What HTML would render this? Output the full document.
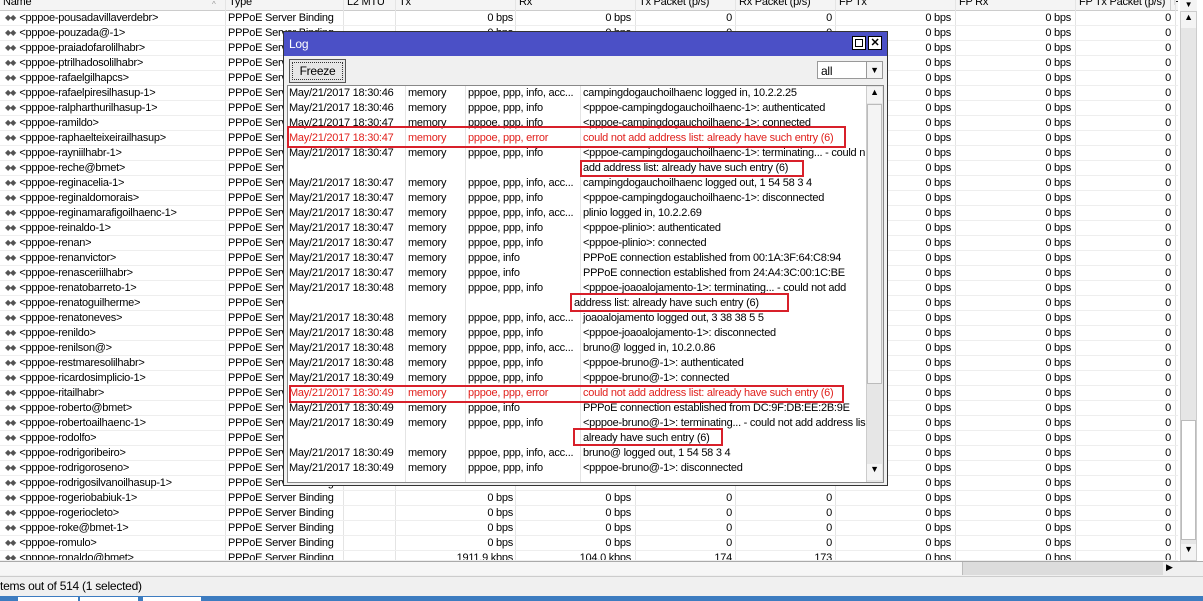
<!DOCTYPE html>
<html><head><meta charset="utf-8"><style>
*{margin:0;padding:0;box-sizing:border-box}
body{width:1203px;height:601px;overflow:hidden;background:#fff;font-family:"Liberation Sans",Arial,sans-serif;font-size:11px;letter-spacing:-0.25px;color:#000;position:relative}
.a{position:absolute;white-space:nowrap}
.hd{position:absolute;left:0;top:0;width:1180px;height:11px;background:#f4f4f4;border-bottom:1px solid #ccc;overflow:hidden}
.hd span{position:absolute;top:-4px;border-left:1px solid #ccc;padding-left:3px;height:15px}
.r{position:absolute;left:0;width:1178px;height:15px;border-bottom:1px solid #eee;overflow:hidden}
.r span{position:absolute;top:1px;white-space:nowrap}
.n{left:5px}.n i{font-style:normal;font-size:8px;color:#555;letter-spacing:-1px;margin-right:4px;position:relative;top:-1px}
.t{left:228px}
.c1{left:395px;width:118px;text-align:right}
.c2{left:515px;width:116px;text-align:right}
.c3{left:635px;width:97px;text-align:right}
.c4{left:735px;width:97px;text-align:right}
.c5{left:835px;width:116px;text-align:right}
.c6{left:955px;width:116px;text-align:right}
.c7{left:1075px;width:96px;text-align:right}
.vl{position:absolute;top:0;width:1px;height:561px;background:#e4e4e4}
.log{position:absolute;left:283px;top:31px;width:605px;height:455px;background:#f0f0f0;border:1px solid #333}
.tb{position:absolute;left:0;top:0;width:603px;height:24px;background:#4b50c6;color:#fff;font-size:12px}
.lr{position:absolute;left:1px;width:577px;height:15px;overflow:hidden}
.lr span{position:absolute;top:0;white-space:nowrap}
.d{left:0}.m{left:119px}.p{left:179px}.g{left:294px}
.red{color:#e0201c}
.bx{position:absolute;border:2px solid #d8202a}
</style></head><body>
<div class="hd"><span style="left:0;border:0">Name</span><span style="left:225px">Type</span><span style="left:343px">L2 MTU</span><span style="left:395px">Tx</span><span style="left:515px">Rx</span><span style="left:635px">Tx Packet (p/s)</span><span style="left:735px">Rx Packet (p/s)</span><span style="left:835px">FP Tx</span><span style="left:955px">FP Rx</span><span style="left:1075px">FP Tx Packet (p/s)</span><span style="left:1170px">F</span></div>
<div class="a" style="left:212px;top:0;font-size:8px;color:#999">^</div>
<div class="vl" style="left:225px"></div><div class="vl" style="left:343px"></div><div class="vl" style="left:395px"></div><div class="vl" style="left:515px"></div><div class="vl" style="left:635px"></div><div class="vl" style="left:735px"></div><div class="vl" style="left:835px"></div><div class="vl" style="left:955px"></div><div class="vl" style="left:1075px"></div><div class="vl" style="left:1175px"></div>

<div class="r" style="top:11px"><span class="n"><i>◆◆</i>&lt;pppoe-pousadavillaverdebr&gt;</span><span class="t">PPPoE Server Binding</span><span class="c1">0 bps</span><span class="c2">0 bps</span><span class="c3">0</span><span class="c4">0</span><span class="c5">0 bps</span><span class="c6">0 bps</span><span class="c7">0</span></div>
<div class="r" style="top:26px"><span class="n"><i>◆◆</i>&lt;pppoe-pouzada@-1&gt;</span><span class="t">PPPoE Server Binding</span><span class="c1">0 bps</span><span class="c2">0 bps</span><span class="c3">0</span><span class="c4">0</span><span class="c5">0 bps</span><span class="c6">0 bps</span><span class="c7">0</span></div>
<div class="r" style="top:41px"><span class="n"><i>◆◆</i>&lt;pppoe-praiadofarolilhabr&gt;</span><span class="t">PPPoE Server Binding</span><span class="c5">0 bps</span><span class="c6">0 bps</span><span class="c7">0</span></div>
<div class="r" style="top:56px"><span class="n"><i>◆◆</i>&lt;pppoe-ptrilhadosolilhabr&gt;</span><span class="t">PPPoE Server Binding</span><span class="c5">0 bps</span><span class="c6">0 bps</span><span class="c7">0</span></div>
<div class="r" style="top:71px"><span class="n"><i>◆◆</i>&lt;pppoe-rafaelgilhapcs&gt;</span><span class="t">PPPoE Server Binding</span><span class="c5">0 bps</span><span class="c6">0 bps</span><span class="c7">0</span></div>
<div class="r" style="top:86px"><span class="n"><i>◆◆</i>&lt;pppoe-rafaelpiresilhasup-1&gt;</span><span class="t">PPPoE Server Binding</span><span class="c5">0 bps</span><span class="c6">0 bps</span><span class="c7">0</span></div>
<div class="r" style="top:101px"><span class="n"><i>◆◆</i>&lt;pppoe-ralpharthurilhasup-1&gt;</span><span class="t">PPPoE Server Binding</span><span class="c5">0 bps</span><span class="c6">0 bps</span><span class="c7">0</span></div>
<div class="r" style="top:116px"><span class="n"><i>◆◆</i>&lt;pppoe-ramildo&gt;</span><span class="t">PPPoE Server Binding</span><span class="c5">0 bps</span><span class="c6">0 bps</span><span class="c7">0</span></div>
<div class="r" style="top:131px"><span class="n"><i>◆◆</i>&lt;pppoe-raphaelteixeirailhasup&gt;</span><span class="t">PPPoE Server Binding</span><span class="c5">0 bps</span><span class="c6">0 bps</span><span class="c7">0</span></div>
<div class="r" style="top:146px"><span class="n"><i>◆◆</i>&lt;pppoe-rayniilhabr-1&gt;</span><span class="t">PPPoE Server Binding</span><span class="c5">0 bps</span><span class="c6">0 bps</span><span class="c7">0</span></div>
<div class="r" style="top:161px"><span class="n"><i>◆◆</i>&lt;pppoe-reche@bmet&gt;</span><span class="t">PPPoE Server Binding</span><span class="c5">0 bps</span><span class="c6">0 bps</span><span class="c7">0</span></div>
<div class="r" style="top:176px"><span class="n"><i>◆◆</i>&lt;pppoe-reginacelia-1&gt;</span><span class="t">PPPoE Server Binding</span><span class="c5">0 bps</span><span class="c6">0 bps</span><span class="c7">0</span></div>
<div class="r" style="top:191px"><span class="n"><i>◆◆</i>&lt;pppoe-reginaldomorais&gt;</span><span class="t">PPPoE Server Binding</span><span class="c5">0 bps</span><span class="c6">0 bps</span><span class="c7">0</span></div>
<div class="r" style="top:206px"><span class="n"><i>◆◆</i>&lt;pppoe-reginamarafigoilhaenc-1&gt;</span><span class="t">PPPoE Server Binding</span><span class="c5">0 bps</span><span class="c6">0 bps</span><span class="c7">0</span></div>
<div class="r" style="top:221px"><span class="n"><i>◆◆</i>&lt;pppoe-reinaldo-1&gt;</span><span class="t">PPPoE Server Binding</span><span class="c5">0 bps</span><span class="c6">0 bps</span><span class="c7">0</span></div>
<div class="r" style="top:236px"><span class="n"><i>◆◆</i>&lt;pppoe-renan&gt;</span><span class="t">PPPoE Server Binding</span><span class="c5">0 bps</span><span class="c6">0 bps</span><span class="c7">0</span></div>
<div class="r" style="top:251px"><span class="n"><i>◆◆</i>&lt;pppoe-renanvictor&gt;</span><span class="t">PPPoE Server Binding</span><span class="c5">0 bps</span><span class="c6">0 bps</span><span class="c7">0</span></div>
<div class="r" style="top:266px"><span class="n"><i>◆◆</i>&lt;pppoe-renasceriilhabr&gt;</span><span class="t">PPPoE Server Binding</span><span class="c5">0 bps</span><span class="c6">0 bps</span><span class="c7">0</span></div>
<div class="r" style="top:281px"><span class="n"><i>◆◆</i>&lt;pppoe-renatobarreto-1&gt;</span><span class="t">PPPoE Server Binding</span><span class="c5">0 bps</span><span class="c6">0 bps</span><span class="c7">0</span></div>
<div class="r" style="top:296px"><span class="n"><i>◆◆</i>&lt;pppoe-renatoguilherme&gt;</span><span class="t">PPPoE Server Binding</span><span class="c5">0 bps</span><span class="c6">0 bps</span><span class="c7">0</span></div>
<div class="r" style="top:311px"><span class="n"><i>◆◆</i>&lt;pppoe-renatoneves&gt;</span><span class="t">PPPoE Server Binding</span><span class="c5">0 bps</span><span class="c6">0 bps</span><span class="c7">0</span></div>
<div class="r" style="top:326px"><span class="n"><i>◆◆</i>&lt;pppoe-renildo&gt;</span><span class="t">PPPoE Server Binding</span><span class="c5">0 bps</span><span class="c6">0 bps</span><span class="c7">0</span></div>
<div class="r" style="top:341px"><span class="n"><i>◆◆</i>&lt;pppoe-renilson@&gt;</span><span class="t">PPPoE Server Binding</span><span class="c5">0 bps</span><span class="c6">0 bps</span><span class="c7">0</span></div>
<div class="r" style="top:356px"><span class="n"><i>◆◆</i>&lt;pppoe-restmaresolilhabr&gt;</span><span class="t">PPPoE Server Binding</span><span class="c5">0 bps</span><span class="c6">0 bps</span><span class="c7">0</span></div>
<div class="r" style="top:371px"><span class="n"><i>◆◆</i>&lt;pppoe-ricardosimplicio-1&gt;</span><span class="t">PPPoE Server Binding</span><span class="c5">0 bps</span><span class="c6">0 bps</span><span class="c7">0</span></div>
<div class="r" style="top:386px"><span class="n"><i>◆◆</i>&lt;pppoe-ritailhabr&gt;</span><span class="t">PPPoE Server Binding</span><span class="c5">0 bps</span><span class="c6">0 bps</span><span class="c7">0</span></div>
<div class="r" style="top:401px"><span class="n"><i>◆◆</i>&lt;pppoe-roberto@bmet&gt;</span><span class="t">PPPoE Server Binding</span><span class="c5">0 bps</span><span class="c6">0 bps</span><span class="c7">0</span></div>
<div class="r" style="top:416px"><span class="n"><i>◆◆</i>&lt;pppoe-robertoailhaenc-1&gt;</span><span class="t">PPPoE Server Binding</span><span class="c5">0 bps</span><span class="c6">0 bps</span><span class="c7">0</span></div>
<div class="r" style="top:431px"><span class="n"><i>◆◆</i>&lt;pppoe-rodolfo&gt;</span><span class="t">PPPoE Server Binding</span><span class="c5">0 bps</span><span class="c6">0 bps</span><span class="c7">0</span></div>
<div class="r" style="top:446px"><span class="n"><i>◆◆</i>&lt;pppoe-rodrigoribeiro&gt;</span><span class="t">PPPoE Server Binding</span><span class="c5">0 bps</span><span class="c6">0 bps</span><span class="c7">0</span></div>
<div class="r" style="top:461px"><span class="n"><i>◆◆</i>&lt;pppoe-rodrigoroseno&gt;</span><span class="t">PPPoE Server Binding</span><span class="c5">0 bps</span><span class="c6">0 bps</span><span class="c7">0</span></div>
<div class="r" style="top:476px"><span class="n"><i>◆◆</i>&lt;pppoe-rodrigosilvanoilhasup-1&gt;</span><span class="t">PPPoE Server Binding</span><span class="c5">0 bps</span><span class="c6">0 bps</span><span class="c7">0</span></div>
<div class="r" style="top:491px"><span class="n"><i>◆◆</i>&lt;pppoe-rogeriobabiuk-1&gt;</span><span class="t">PPPoE Server Binding</span><span class="c1">0 bps</span><span class="c2">0 bps</span><span class="c3">0</span><span class="c4">0</span><span class="c5">0 bps</span><span class="c6">0 bps</span><span class="c7">0</span></div>
<div class="r" style="top:506px"><span class="n"><i>◆◆</i>&lt;pppoe-rogeriocleto&gt;</span><span class="t">PPPoE Server Binding</span><span class="c1">0 bps</span><span class="c2">0 bps</span><span class="c3">0</span><span class="c4">0</span><span class="c5">0 bps</span><span class="c6">0 bps</span><span class="c7">0</span></div>
<div class="r" style="top:521px"><span class="n"><i>◆◆</i>&lt;pppoe-roke@bmet-1&gt;</span><span class="t">PPPoE Server Binding</span><span class="c1">0 bps</span><span class="c2">0 bps</span><span class="c3">0</span><span class="c4">0</span><span class="c5">0 bps</span><span class="c6">0 bps</span><span class="c7">0</span></div>
<div class="r" style="top:536px"><span class="n"><i>◆◆</i>&lt;pppoe-romulo&gt;</span><span class="t">PPPoE Server Binding</span><span class="c1">0 bps</span><span class="c2">0 bps</span><span class="c3">0</span><span class="c4">0</span><span class="c5">0 bps</span><span class="c6">0 bps</span><span class="c7">0</span></div>
<div class="r" style="top:551px;height:10px"><span class="n"><i>◆◆</i>&lt;pppoe-ronaldo@bmet&gt;</span><span class="t">PPPoE Server Binding</span><span class="c1">1911.9 kbps</span><span class="c2">104.0 kbps</span><span class="c3">174</span><span class="c4">173</span><span class="c5">0 bps</span><span class="c6">0 bps</span><span class="c7">0</span></div>

<div class="a" style="left:1178px;top:0;width:25px;height:576px;background:#fff"></div>
<div class="a" style="left:1180px;top:11px;width:17px;height:550px;background:#e6e6e6;border:1px solid #ccc"></div>
<div class="a" style="left:1181px;top:12px;width:15px;height:16px;background:#f4f4f4;font-size:9px;text-align:center">▲</div>
<div class="a" style="left:1181px;top:420px;width:15px;height:120px;background:#fff;border:1px solid #bbb"></div>
<div class="a" style="left:1181px;top:544px;width:15px;height:16px;background:#f4f4f4;font-size:9px;text-align:center">▼</div>
<div class="a" style="left:1180px;top:0;width:17px;height:11px;background:#f4f4f4;font-size:8px;text-align:center">▼</div>
<div class="a" style="left:0;top:561px;width:1203px;height:15px;background:#f0f0f0;border-top:1px solid #aaa"></div>
<div class="a" style="left:0;top:562px;width:963px;height:13px;background:#f6f6f6;border-right:1px solid #bbb"></div>
<div class="a" style="left:963px;top:562px;width:200px;height:13px;background:#dcdcdc"></div>
<div class="a" style="left:1166px;top:562px;font-size:9px">▶</div>
<div class="a" style="left:0;top:576px;width:1203px;height:20px;background:#f0f0f0;border-top:1px solid #ccc"></div>
<div class="a" style="left:0;top:579px;font-size:12px">tems out of 514 (1 selected)</div>
<div class="a" style="left:0;top:596px;width:1203px;height:5px;background:#3d7cc0"></div>
<div class="a" style="left:18px;top:597px;width:60px;height:4px;background:#fff"></div>
<div class="a" style="left:80px;top:597px;width:58px;height:4px;background:#fff"></div>
<div class="a" style="left:143px;top:597px;width:58px;height:4px;background:#fff"></div>

<div class="log">
<div class="tb"><span class="a" style="left:5px;top:5px">Log</span>
<span class="a" style="left:568px;top:4px;width:14px;height:14px;border:1px solid #000;background:#fff"><span class="a" style="left:2px;top:2px;width:8px;height:8px;border:1px solid #000"></span></span>
<span class="a" style="left:584px;top:4px;width:14px;height:14px;border:1px solid #000;background:#fff;color:#000;font-size:11px;text-align:center;line-height:12px;font-weight:bold">✕</span></div>
<div class="a" style="left:5px;top:27px;width:57px;height:24px;border:1px solid #555;background:#e6e6e6"><div class="a" style="left:2px;top:2px;width:51px;height:18px;border:1px dotted #333;text-align:center;line-height:17px;font-size:12px">Freeze</div></div>
<div class="a" style="left:533px;top:29px;width:50px;height:18px;border:1px solid #999;background:#fff;padding:2px 3px;font-size:12px">all</div>
<div class="a" style="left:582px;top:29px;width:17px;height:18px;border:1px solid #999;background:#f4f4f4;font-size:9px;text-align:center;line-height:16px">▼</div>
<div class="a" style="left:3px;top:53px;width:597px;height:398px;background:#fff;border:1px solid #888;overflow:hidden">
<div class="a" style="left:117px;top:0;width:1px;height:400px;background:#e4e4e4"></div>
<div class="a" style="left:177px;top:0;width:1px;height:400px;background:#e4e4e4"></div>
<div class="a" style="left:292px;top:0;width:1px;height:400px;background:#e4e4e4"></div>
<div class="lr" style="top:1px"><span class="d">May/21/2017 18:30:46</span><span class="m">memory</span><span class="p">pppoe, ppp, info, acc...</span><span class="g">campingdogauchoilhaenc logged in, 10.2.2.25</span></div>
<div class="lr" style="top:16px"><span class="d">May/21/2017 18:30:46</span><span class="m">memory</span><span class="p">pppoe, ppp, info</span><span class="g">&lt;pppoe-campingdogauchoilhaenc-1&gt;: authenticated</span></div>
<div class="lr" style="top:31px"><span class="d">May/21/2017 18:30:47</span><span class="m">memory</span><span class="p">pppoe, ppp, info</span><span class="g">&lt;pppoe-campingdogauchoilhaenc-1&gt;: connected</span></div>
<div class="lr red" style="top:46px"><span class="d">May/21/2017 18:30:47</span><span class="m">memory</span><span class="p">pppoe, ppp, error</span><span class="g">could not add address list: already have such entry (6)</span></div>
<div class="lr" style="top:61px"><span class="d">May/21/2017 18:30:47</span><span class="m">memory</span><span class="p">pppoe, ppp, info</span><span class="g">&lt;pppoe-campingdogauchoilhaenc-1&gt;: terminating... - could n</span></div>
<div class="lr" style="top:76px"><span class="g">add address list: already have such entry (6)</span></div>
<div class="lr" style="top:91px"><span class="d">May/21/2017 18:30:47</span><span class="m">memory</span><span class="p">pppoe, ppp, info, acc...</span><span class="g">campingdogauchoilhaenc logged out, 1 54 58 3 4</span></div>
<div class="lr" style="top:106px"><span class="d">May/21/2017 18:30:47</span><span class="m">memory</span><span class="p">pppoe, ppp, info</span><span class="g">&lt;pppoe-campingdogauchoilhaenc-1&gt;: disconnected</span></div>
<div class="lr" style="top:121px"><span class="d">May/21/2017 18:30:47</span><span class="m">memory</span><span class="p">pppoe, ppp, info, acc...</span><span class="g">plinio logged in, 10.2.2.69</span></div>
<div class="lr" style="top:136px"><span class="d">May/21/2017 18:30:47</span><span class="m">memory</span><span class="p">pppoe, ppp, info</span><span class="g">&lt;pppoe-plinio&gt;: authenticated</span></div>
<div class="lr" style="top:151px"><span class="d">May/21/2017 18:30:47</span><span class="m">memory</span><span class="p">pppoe, ppp, info</span><span class="g">&lt;pppoe-plinio&gt;: connected</span></div>
<div class="lr" style="top:166px"><span class="d">May/21/2017 18:30:47</span><span class="m">memory</span><span class="p">pppoe, info</span><span class="g">PPPoE connection established from 00:1A:3F:64:C8:94</span></div>
<div class="lr" style="top:181px"><span class="d">May/21/2017 18:30:47</span><span class="m">memory</span><span class="p">pppoe, info</span><span class="g">PPPoE connection established from 24:A4:3C:00:1C:BE</span></div>
<div class="lr" style="top:196px"><span class="d">May/21/2017 18:30:48</span><span class="m">memory</span><span class="p">pppoe, ppp, info</span><span class="g">&lt;pppoe-joaoalojamento-1&gt;: terminating... - could not add</span></div>
<div class="lr" style="top:211px"><span class="g" style="left:285px">address list: already have such entry (6)</span></div>
<div class="lr" style="top:226px"><span class="d">May/21/2017 18:30:48</span><span class="m">memory</span><span class="p">pppoe, ppp, info, acc...</span><span class="g">joaoalojamento logged out, 3 38 38 5 5</span></div>
<div class="lr" style="top:241px"><span class="d">May/21/2017 18:30:48</span><span class="m">memory</span><span class="p">pppoe, ppp, info</span><span class="g">&lt;pppoe-joaoalojamento-1&gt;: disconnected</span></div>
<div class="lr" style="top:256px"><span class="d">May/21/2017 18:30:48</span><span class="m">memory</span><span class="p">pppoe, ppp, info, acc...</span><span class="g">bruno@ logged in, 10.2.0.86</span></div>
<div class="lr" style="top:271px"><span class="d">May/21/2017 18:30:48</span><span class="m">memory</span><span class="p">pppoe, ppp, info</span><span class="g">&lt;pppoe-bruno@-1&gt;: authenticated</span></div>
<div class="lr" style="top:286px"><span class="d">May/21/2017 18:30:49</span><span class="m">memory</span><span class="p">pppoe, ppp, info</span><span class="g">&lt;pppoe-bruno@-1&gt;: connected</span></div>
<div class="lr red" style="top:301px"><span class="d">May/21/2017 18:30:49</span><span class="m">memory</span><span class="p">pppoe, ppp, error</span><span class="g">could not add address list: already have such entry (6)</span></div>
<div class="lr" style="top:316px"><span class="d">May/21/2017 18:30:49</span><span class="m">memory</span><span class="p">pppoe, info</span><span class="g">PPPoE connection established from DC:9F:DB:EE:2B:9E</span></div>
<div class="lr" style="top:331px"><span class="d">May/21/2017 18:30:49</span><span class="m">memory</span><span class="p">pppoe, ppp, info</span><span class="g">&lt;pppoe-bruno@-1&gt;: terminating... - could not add address lis</span></div>
<div class="lr" style="top:346px"><span class="g">already have such entry (6)</span></div>
<div class="lr" style="top:361px"><span class="d">May/21/2017 18:30:49</span><span class="m">memory</span><span class="p">pppoe, ppp, info, acc...</span><span class="g">bruno@ logged out, 1 54 58 3 4</span></div>
<div class="lr" style="top:376px"><span class="d">May/21/2017 18:30:49</span><span class="m">memory</span><span class="p">pppoe, ppp, info</span><span class="g">&lt;pppoe-bruno@-1&gt;: disconnected</span></div>
<div class="a" style="left:578px;top:0;width:17px;height:396px;background:#e6e6e6;border-left:1px solid #ccc"></div>
<div class="a" style="left:579px;top:1px;width:15px;height:16px;background:#f4f4f4;font-size:9px;text-align:center">▲</div>
<div class="a" style="left:579px;top:18px;width:15px;height:280px;background:#f4f4f4;border:1px solid #bbb"></div>
<div class="a" style="left:579px;top:378px;width:15px;height:16px;background:#f4f4f4;font-size:9px;text-align:center">▼</div>
</div>
</div>
<div class="bx" style="left:287px;top:126px;width:559px;height:22px"></div>
<div class="bx" style="left:580px;top:160px;width:224px;height:17px"></div>
<div class="bx" style="left:570px;top:293px;width:219px;height:19px"></div>
<div class="bx" style="left:289px;top:385px;width:555px;height:18px"></div>
<div class="bx" style="left:573px;top:428px;width:150px;height:18px"></div>
</body></html>
